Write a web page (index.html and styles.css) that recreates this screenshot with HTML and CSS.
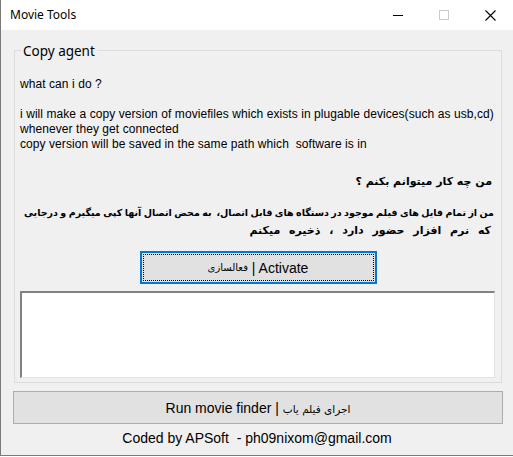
FILE: index.html
```html
<!DOCTYPE html>
<html lang="en">
<head>
<meta charset="utf-8">
<title>Movie Tools</title>
<link rel="stylesheet" href="styles.css">
</head>
<body>
<div class="window">
  <div class="titlebar">
    <span class="title">Movie Tools</span>
    <div class="controls">
      <span class="ctl">
        <svg width="11" height="11" viewBox="0 0 11 11"><path d="M0 5.5H10" stroke="#000" stroke-width="1"/></svg>
      </span>
      <span class="ctl">
        <svg width="11" height="11" viewBox="0 0 11 11"><rect x="0.5" y="0.5" width="9" height="9" fill="none" stroke="#cccccc" stroke-width="1"/></svg>
      </span>
      <span class="ctl">
        <svg width="11" height="11" viewBox="0 0 11 11"><path d="M0.5 0.5L10.5 10.5M10.5 0.5L0.5 10.5" stroke="#000" stroke-width="1.1"/></svg>
      </span>
    </div>
  </div>
  <div class="client">
    <fieldset class="group">
      <legend class="group-title">Copy agent</legend>
      <div class="en-text">
        <p class="line">what can i do ?</p>
        <p class="line">&nbsp;</p>
        <p class="line">i will make a copy version of moviefiles which exists in plugable devices(such as usb,cd)</p>
        <p class="line">whenever they get connected</p>
        <p class="line">copy version will be saved in the same path which&nbsp; software is in</p>
      </div>
      <p class="fa-q" dir="rtl">من چه کار میتوانم بکنم ؟</p>
      <div class="fa-text" dir="rtl">
        <p class="fa-line fa-full">من از تمام فایل های فیلم موجود در دستگاه های قابل اتصال،&nbsp; به محض اتصال آنها کپی میگیرم و درجایی</p>
        <p class="fa-line fa-last">که نرم افزار حضور دارد ، ذخیره میکنم</p>
      </div>
      <div class="btn-row">
        <button class="btn btn-activate"><span class="focus"><span class="fa-span">فعالسازی</span>&nbsp;| Activate</span></button>
      </div>
      <div class="textbox"></div>
    </fieldset>
    <button class="btn btn-run">Run movie finder |&nbsp;<span class="fa-span">اجرای فیلم یاب</span></button>
    <p class="footer">Coded by APSoft&nbsp; - ph09nixom@gmail.com</p>
  </div>
</div>
</body>
</html>
```

FILE: styles.css
```css
* { box-sizing: border-box; }
html, body { margin: 0; padding: 0; background: #ffffff; }
body { width: 513px; height: 457px; overflow: hidden; }

.window {
  width: 513px;
  height: 456px;
  border-left: 1px solid #7a7a7a;
  border-bottom: 1px solid #7a7a7a;
  background: #f0f0f0;
  display: flex;
  flex-direction: column;
}

.titlebar {
  height: 30px;
  background: #ffffff;
  display: flex;
  align-items: center;
  justify-content: space-between;
}
.title {
  font-family: "Noto Sans", "Open Sans", sans-serif;
  font-size: 12px;
  color: #000;
  margin-left: 9px;
  margin-top: -1px;
}
.controls { display: flex; height: 30px; }
.ctl {
  width: 46px;
  height: 30px;
  display: flex;
  align-items: center;
  justify-content: center;
}
.ctl svg { display: block; }

.client {
  flex: 1;
  display: flex;
  flex-direction: column;
  padding-top: 11px;
}

.group {
  margin: 0 0 0 13px;
  padding: 0 6px 4px 5px;
  width: 488px;
  border: 1px solid #dcdcdc;
  min-width: 0;
}
.group-title {
  font-family: "Noto Sans", "Open Sans", sans-serif;
  font-size: 13.5px;
  line-height: 18px;
  padding: 0 2px;
  margin-left: 1px;
  color: #000;
  position: relative;
  top: 1px;
}

.en-text {
  margin-top: 18px;
  font-family: "Liberation Sans", Arial, sans-serif;
  font-size: 12px;
  line-height: 15px;
  letter-spacing: 0.07px;
  color: #000;
}
.line { margin: 0; white-space: nowrap; }

.fa-q {
  margin: 21px 0 0 0;
  font-family: "DejaVu Sans", sans-serif;
  font-weight: bold;
  font-size: 11px;
  line-height: 18px;
  color: #000;
  padding-right: 3px;
}
.fa-text {
  margin-top: 13px;
  font-family: "DejaVu Sans", sans-serif;
  font-weight: bold;
  font-size: 10px;
  line-height: 18px;
  color: #000;
  padding: 0 1px 0 4px;
}
.fa-line { margin: 0; white-space: nowrap; }
.fa-full {
  font-size: 9.5px;
  word-spacing: -1px;
  text-align: justify;
  text-align-last: justify;
}
.fa-last { font-size: 11px; word-spacing: 5px; padding-right: 3px; }

.btn-row {
  display: flex;
  justify-content: center;
  margin-top: 11px;
}
.btn {
  font-family: "Liberation Sans", Arial, sans-serif;
  color: #000;
  background: #e1e1e1;
  cursor: default;
}
.fa-span {
  font-family: "DejaVu Sans", sans-serif;
  font-size: 10px;
}
.btn-activate {
  width: 237px;
  height: 33px;
  border: 2px solid #0078d7;
  padding: 1px;
  font-size: 14px;
  margin-left: 1px;
}
.focus {
  display: flex;
  align-items: center;
  justify-content: center;
  width: 100%;
  height: 100%;
  border: 1px dotted #000;
  white-space: pre;
}

.textbox {
  margin-top: 7px;
  height: 87px;
  width: 475px;
  background: #ffffff;
  border-style: solid;
  border-width: 2px 1px 1px 2px;
  border-color: #828282 #e3e3e3 #e3e3e3 #828282;
}

.btn-run {
  margin: 8px 0 0 12px;
  width: 490px;
  height: 33px;
  border: 1px solid #adadad;
  font-size: 14px;
  padding: 0;
}
.btn-run .fa-span { font-size: 10.5px; }

.footer {
  margin: 6px 0 0 0;
  text-align: center;
  font-family: "Liberation Sans", Arial, sans-serif;
  font-size: 14px;
  line-height: 16px;
  color: #000;
  white-space: pre;
}
```
